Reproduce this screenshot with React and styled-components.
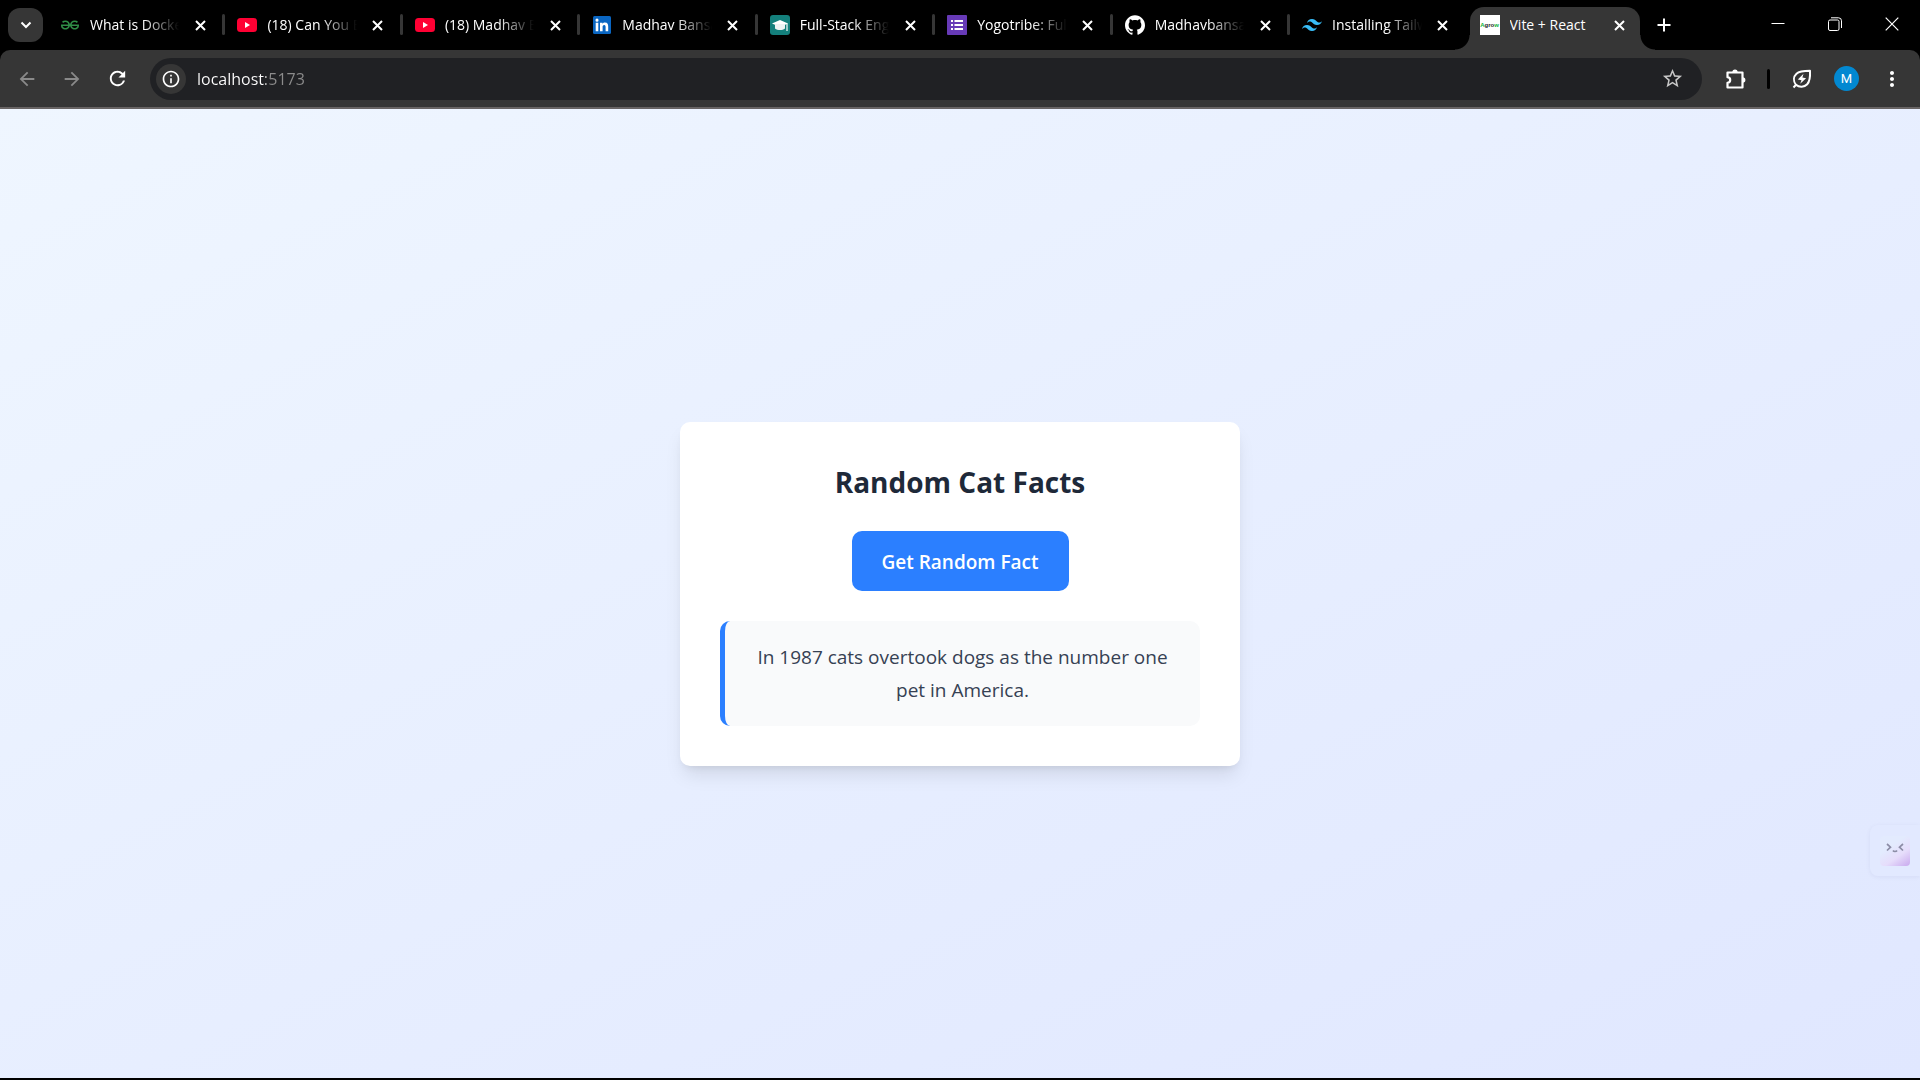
import React, { useState } from "react";
import styled, { createGlobalStyle, css } from "styled-components";
import {
  MdArrowBack,
  MdArrowForward,
  MdRefresh,
  MdInfoOutline,
  MdStarOutline,
  MdMoreVert,
} from "react-icons/md";
import { SiGeeksforgeeks, SiTailwindcss, SiGithub } from "react-icons/si";

const GlobalStyle = createGlobalStyle`
  *, *::before, *::after { box-sizing: border-box; }
  html, body, #root { height: 100%; }
  body {
    margin: 0;
    background: #000;
    font-family: "Open Sans", "Noto Sans", sans-serif;
    overflow: hidden;
  }
  button { font: inherit; border: 0; padding: 0; background: none; color: inherit; cursor: pointer; }
  h1, p { margin: 0; }
`;

const Window = styled.div`
  display: flex;
  flex-direction: column;
  min-height: 100vh;
  padding-bottom: 2px;
  background: #000;
`;

const TabStrip = styled.header`
  display: flex;
  align-items: flex-end;
  height: 50px;
  color: #fff;
`;

const TabSearch = styled.button`
  flex: none;
  display: grid;
  place-items: center;
  width: 35px;
  height: 34px;
  margin: 0 5px 8px 8px;
  border-radius: 12px;
  background: #363636;
`;

const Tabs = styled.div`
  flex: 1;
  min-width: 0;
  display: flex;
`;

const Tab = styled.div`
  position: relative;
  flex: 1 1 0;
  min-width: 0;
  display: flex;
  align-items: center;
  height: 43px;
  padding: 0 15px 7px 12px;
  margin-top: 7px;

  ${(p) =>
    p.$divided &&
    css`
      &::after {
        content: "";
        position: absolute;
        right: 0;
        top: 7px;
        width: 3px;
        height: 21px;
        border-radius: 2px;
        background: #363636;
      }
    `}

  ${(p) =>
    p.$active &&
    css`
      margin-right: 7px;
      margin-left: 2px;
      padding: 0 10px 7px 10px;
      background: #363636;
      border-radius: 14px 14px 0 0;

      &::before,
      &::after {
        content: "";
        position: absolute;
        bottom: 0;
        width: 15px;
        height: 15px;
      }
      &::before {
        right: 100%;
        background: radial-gradient(circle at 0 0, transparent 14px, #363636 15px);
      }
      &::after {
        left: 100%;
        background: radial-gradient(circle at 100% 0, transparent 14px, #363636 15px);
      }
    `}
`;

const Favicon = styled.span`
  flex: none;
  display: grid;
  place-items: center;
  width: 20px;
  height: 20px;
  margin-right: 10px;
  svg { display: block; }
`;

const SiteMark = styled.span`
  display: grid;
  place-items: center;
  width: 20px;
  height: 20px;
  background: #fff;
  color: #222;
  font: 700 6px "Liberation Sans", sans-serif;
  b { color: #12b23c; }
`;

const TabTitle = styled.span`
  flex: 1;
  min-width: 0;
  overflow: hidden;
  white-space: nowrap;
  font-size: 14px;
  line-height: 20px;
  ${(p) =>
    p.$fade &&
    css`
      mask-image: linear-gradient(to right, #000 calc(100% - 36px), transparent);
    `}
`;

const TabClose = styled.button`
  flex: none;
  display: grid;
  place-items: center;
  width: 20px;
  height: 20px;
  margin-left: 11px;
`;

const NewTab = styled.button`
  flex: none;
  display: grid;
  place-items: center;
  width: 34px;
  height: 34px;
  margin-bottom: 8px;
`;

const WindowControls = styled.div`
  flex: none;
  display: flex;
  align-self: stretch;
  margin-left: 68px;
`;

const WindowButton = styled.button`
  display: grid;
  place-items: center;
  width: 57px;
  height: 48px;
`;

const Toolbar = styled.nav`
  display: flex;
  align-items: center;
  height: 59px;
  padding: 0 13px 0 12px;
  background: #363636;
  border-bottom: 2px solid #686464;
  border-radius: 10px 10px 0 0;
  color: #fff;
`;

const ToolButton = styled.button`
  flex: none;
  display: grid;
  place-items: center;
  width: 30px;
  height: 30px;
  margin-right: ${(p) => p.$gap || 0}px;
  color: ${(p) => (p.$dim ? "#8a8a8a" : "#fff")};
`;

const AddressBar = styled.div`
  flex: 1;
  min-width: 0;
  display: flex;
  align-items: center;
  height: 42px;
  padding: 0 15px 0 6px;
  margin-right: 19px;
  border-radius: 21px;
  background: #202124;
`;

const SiteInfo = styled.button`
  flex: none;
  display: grid;
  place-items: center;
  width: 30px;
  height: 30px;
  margin-right: 11px;
  border-radius: 50%;
  background: #363636;
`;

const AddressInput = styled.input`
  flex: 1;
  min-width: 0;
  height: 30px;
  padding: 0;
  border: 0;
  outline: 0;
  font: 400 16px "Open Sans", "Noto Sans", sans-serif;
  color: transparent;
  caret-color: #fff;
  background: linear-gradient(to right, #fff 69px, #8c8c8c 69px);
  background-clip: text;
`;

const ToolDivider = styled.span`
  flex: none;
  width: 3px;
  height: 20px;
  margin: 0 17px 0 16px;
  border-radius: 2px;
  background: #000;
`;

const Avatar = styled.button`
  flex: none;
  display: grid;
  place-items: center;
  width: 25px;
  height: 25px;
  margin-right: 18px;
  border-radius: 50%;
  background: #0288d1;
  && { font: 400 13px Roboto, sans-serif; }
`;

const Page = styled.main`
  position: relative;
  flex: 1;
  display: flex;
  align-items: center;
  justify-content: center;
  background: linear-gradient(to bottom right in oklab, #eff6ff, #e0e7ff);
`;

const Card = styled.section`
  display: flex;
  flex-direction: column;
  align-items: center;
  width: 100%;
  max-width: 560px;
  padding: 40px;
  border-radius: 10px;
  background: #fff;
  box-shadow: 0 12px 19px -4px rgba(0, 0, 0, 0.1), 0 5px 8px -5px rgba(0, 0, 0, 0.1);
`;

const Title = styled.h1`
  margin-bottom: 29px;
  font-size: 28px;
  font-weight: 700;
  line-height: 40px;
  color: #1e2939;
`;

const FactButton = styled.button`
  height: 60px;
  padding: 2px 30px 0;
  margin-bottom: 30px;
  border-radius: 10px;
  background: #2b7fff;
  color: #fff;
  && { font-size: 19px; font-weight: 600; }
`;

const Fact = styled.div`
  width: 100%;
  padding: 20px 20px 19px;
  border-left: 5px solid #2b7fff;
  border-radius: 10px;
  background: #f9fafb;
  color: #364153;
  font-size: 19px;
  line-height: 33px;
  text-align: center;
`;

const Helper = styled.button`
  position: absolute;
  right: 0;
  bottom: 202px;
  display: grid;
  place-items: center start;
  width: 50px;
  height: 51px;
  && { padding-left: 10px; background: #e2e9ff; }
  border-radius: 8px 0 0 8px;
  box-shadow: 0 1px 4px rgba(80, 80, 140, 0.08);
`;

const HelperFace = styled.span`
  display: grid;
  justify-items: center;
  align-content: start;
  width: 30px;
  height: 30px;
  padding-top: 7px;
  border-radius: 4px;
  background: linear-gradient(145deg, #e3ebfe 35%, #e6ddfb 65%, #c9a9ee 100%);
`;

const YoutubeMark = () => (
  <svg width="20" height="14" viewBox="0 0 20 14">
    <rect width="20" height="14" rx="3.5" fill="#ff0033" />
    <path d="M8 4v6l5-3z" fill="#fff" />
  </svg>
);

const LinkedinMark = () => (
  <svg width="18" height="18" viewBox="0 0 18 18">
    <rect width="18" height="18" rx="1.5" fill="#0a66c2" />
    <path
      fill="#fff"
      d="M2.7 6.8h2.6v8.4H2.7zM4 2.6a1.5 1.5 0 1 1 0 3.1 1.5 1.5 0 0 1 0-3.1zM7 6.8h2.5v1.1c.5-.8 1.4-1.3 2.5-1.3 2.6 0 3.2 1.7 3.2 4v4.6h-2.6v-4.1c0-1.1-.1-2.2-1.4-2.2-1.3 0-1.6 1-1.6 2.1v4.2H7z"
    />
  </svg>
);

const CapMark = () => (
  <svg width="20" height="20" viewBox="0 0 20 20">
    <rect width="20" height="20" rx="3" fill="#14807c" />
    <path d="M2 8.5 10 5l8 3.5-8 3.5z" fill="#fff" />
    <path d="M5 9v4.6c2.5 2 7.500 2 10 0V9z" fill="#eef3f3" />
    <path d="M16.400 8.500h1.200V16h-1.200z" fill="#fff" />
  </svg>
);

const FormsMark = () => (
  <svg width="20" height="20" viewBox="0 0 20 20">
    <rect width="20" height="20" rx="1" fill="#673ab7" />
    <path
      fill="#fff"
      d="M4 5h2v2H4zM4 9h2v2H4zM4 13h2v2H4zM7.500 5H16v2H7.500zM7.500 9H16v2H7.500zM7.500 13H16v2H7.500z"
    />
  </svg>
);

const ChevronMark = () => (
  <svg width="12" height="8" viewBox="0 0 12 8" fill="none" stroke="#fff" strokeWidth="2">
    <path d="M1.500 1.500 6 6l4.500-4.500" />
  </svg>
);

const TabCloseMark = () => (
  <svg width="11" height="11" viewBox="0 0 11 11" stroke="#fff" strokeWidth="2">
    <path d="M1 1l9 9M10 1 1 10" />
  </svg>
);

const PlusMark = () => (
  <svg width="14" height="14" viewBox="0 0 14 14" stroke="#fff" strokeWidth="2">
    <path d="M7 .5v13M.5 7h13" />
  </svg>
);

const PuzzleMark = () => (
  <svg width="22" height="22" viewBox="0 0 22 22">
    <path
      d="M2.500 4.500H7.500M11.500 4.500H17.500V19.500H2.500V14.800C4.300 14.600 5.200 13.500 5.200 12S4.300 9.400 2.500 9.200V4.500H17.500"
      fill="none"
      stroke="#fff"
      strokeWidth="2.200"
      strokeLinejoin="round"
    />
    <path d="M7.300 4.500a2.700 2.900 0 0 1 5.400 0zM17.500 9.200a2.900 2.800 0 0 1 0 5.600z" fill="#fff" />
  </svg>
);

const LeafMark = () => (
  <svg width="20" height="20" viewBox="0 0 20 20">
    <path
      d="M1.500 18.500 4 15.800M4 15.800C1 12 1.500 7.500 4.500 4.700 7.300 2 12 1.800 18 1.800c.3 5.700 0 10.500-2.800 13.500-3 3.100-7.800 3.500-11.200.5z"
      fill="none"
      stroke="#fff"
      strokeWidth="2"
      strokeLinejoin="round"
    />
    <path d="M11.500 4.800 5.800 10.500l3.700.8-1.300 3.500 5.900-5.500-3.700-.9z" fill="#fff" />
  </svg>
);

const MinimizeMark = () => (
  <svg width="14" height="14" viewBox="0 0 14 14">
    <path d="M.5 6.500h13" stroke="#fff" />
  </svg>
);

const RestoreMark = () => (
  <svg width="14" height="14" viewBox="0 0 14 14" fill="none" stroke="#fff">
    <rect x=".5" y="3" width="10.500" height="10.500" rx="1.500" />
    <path d="M3 .8h7.500a3 3 0 0 1 3 3V11" />
  </svg>
);

const CloseMark = () => (
  <svg width="14" height="14" viewBox="0 0 14 14">
    <path d="M.7.7l12.600 12.600M13.300.7.7 13.300" stroke="#fff" strokeWidth="1.200" />
  </svg>
);

const FaceMark = () => (
  <svg width="18" height="10" viewBox="0 0 18 10" fill="none" stroke="#8c8da6" strokeWidth="1.700">
    <path d="M1 1l3.500 3.200L1 7.500M17 1l-3.500 3.200L17 7.500M7 7.500c.8 1.300 3.200 1.300 4 0" />
  </svg>
);

const tabs = [
  { title: "What is Docker?", icon: <SiGeeksforgeeks size={18} color="#2f8d46" /> },
  { title: "(18) Can You Build", icon: <YoutubeMark /> },
  { title: "(18) Madhav Bansal", icon: <YoutubeMark /> },
  { title: "Madhav Bansal", icon: <LinkedinMark /> },
  { title: "Full-Stack Engineer", icon: <CapMark /> },
  { title: "Yogotribe: Full", icon: <FormsMark /> },
  { title: "Madhavbansal", icon: <SiGithub size={20} color="#fff" /> },
  { title: "Installing Tailwind", icon: <SiTailwindcss size={20} color="#38bdf8" /> },
  {
    title: "Vite + React",
    icon: (
      <SiteMark>
        <span>
          <b>A</b>gro<b>w</b>
        </span>
      </SiteMark>
    ),
  },
];

export default function App() {
  const [url, setUrl] = useState("localhost:5173");
  const active = tabs.length - 1;

  return (
    <>
      <GlobalStyle />
      <Window>
        <TabStrip>
          <TabSearch aria-label="Search tabs">
            <ChevronMark />
          </TabSearch>
          <Tabs>
            {tabs.map((tab, i) => (
              <Tab key={i} $active={i === active} $divided={i < active - 1}>
                <Favicon>{tab.icon}</Favicon>
                <TabTitle $fade={i !== active}>{tab.title}</TabTitle>
                <TabClose aria-label="Close tab">
                  <TabCloseMark />
                </TabClose>
              </Tab>
            ))}
          </Tabs>
          <NewTab aria-label="New tab">
            <PlusMark />
          </NewTab>
          <WindowControls>
            <WindowButton aria-label="Minimize">
              <MinimizeMark />
            </WindowButton>
            <WindowButton aria-label="Restore">
              <RestoreMark />
            </WindowButton>
            <WindowButton aria-label="Close">
              <CloseMark />
            </WindowButton>
          </WindowControls>
        </TabStrip>

        <Toolbar>
          <ToolButton $dim $gap={15} aria-label="Back">
            <MdArrowBack size={22} />
          </ToolButton>
          <ToolButton $dim $gap={15} aria-label="Forward">
            <MdArrowForward size={22} />
          </ToolButton>
          <ToolButton $gap={18} aria-label="Reload">
            <MdRefresh size={23} />
          </ToolButton>
          <AddressBar>
            <SiteInfo aria-label="Site information">
              <MdInfoOutline size={20} />
            </SiteInfo>
            <AddressInput
              aria-label="Address"
              value={url}
              spellCheck={false}
              onChange={(e) => setUrl(e.target.value)}
            />
            <ToolButton aria-label="Bookmark">
              <MdStarOutline size={23} color="#c7c7c7" />
            </ToolButton>
          </AddressBar>
          <ToolButton aria-label="Extensions">
            <PuzzleMark />
          </ToolButton>
          <ToolDivider />
          <ToolButton $gap={17} aria-label="Energy saver">
            <LeafMark />
          </ToolButton>
          <Avatar aria-label="Profile">M</Avatar>
          <ToolButton aria-label="Menu">
            <MdMoreVert size={24} />
          </ToolButton>
        </Toolbar>

        <Page>
          <Card>
            <Title>Random Cat Facts</Title>
            <FactButton>Get Random Fact</FactButton>
            <Fact>
              <p>In 1987 cats overtook dogs as the number one pet in America.</p>
            </Fact>
          </Card>
          <Helper aria-label="Assistant">
            <HelperFace>
              <FaceMark />
            </HelperFace>
          </Helper>
        </Page>
      </Window>
    </>
  );
}
